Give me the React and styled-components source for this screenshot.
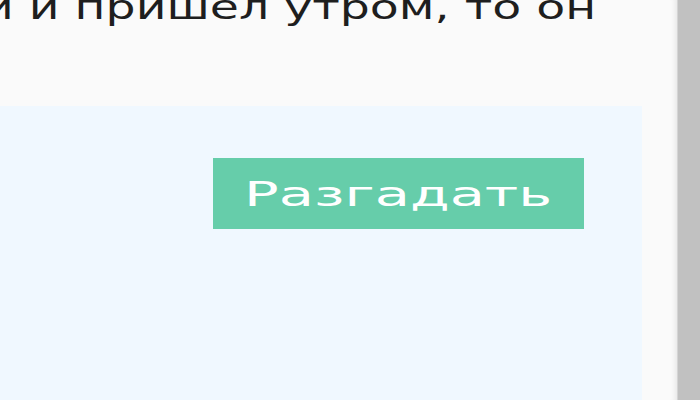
import React from "react";
import styled, { createGlobalStyle } from "styled-components";

const Global = createGlobalStyle`
  html, body { margin: 0; padding: 0; height: 100%; overflow: hidden; }
  body { background: #fafafa; }
  #root { height: 100%; }
`;

const Frame = styled.div`
  display: flex;
  height: 400px;
  width: 700px;
  font-family: "DejaVu Sans", Verdana, sans-serif;
`;

const Main = styled.div`
  flex: 1;
  overflow: hidden;
  background: #fafafa;
  box-shadow: inset -6px 0 5px -4px rgba(0, 0, 0, 0.08);
`;

const Scrollbar = styled.div`
  width: 22px;
  background: #c1c1c1;
  border-left: 1px solid #d4d4d4;
`;

const Paragraph = styled.p`
  margin: -11px 0 0 -48px;
  font-size: 33px;
  line-height: 38px;
  color: #1e1e1e;
  white-space: nowrap;
`;

const Stretched = styled.span`
  display: inline-block;
  transform: scaleX(${(p) => p.$sx});
  transform-origin: ${(p) => p.$origin || "left"} center;
`;

const Panel = styled.div`
  margin-top: 79px;
  width: 642px;
  height: 320px;
  background: #f0f8ff;
  display: flex;
  justify-content: flex-end;
  align-items: flex-start;
  padding: 52px 58px 0 0;
  box-sizing: border-box;
`;

const Button = styled.button`
  background: #66cdaa;
  color: #ffffff;
  border: none;
  border-radius: 0;
  font-family: "DejaVu Sans", Verdana, sans-serif;
  font-size: 34px;
  line-height: 38px;
  width: 371px;
  height: 71px;
  padding: 0;
  display: flex;
  align-items: center;
  justify-content: center;
  cursor: pointer;
  white-space: nowrap;
`;

export default function App() {
  return (
    <>
      <Global />
      <Frame>
        <Main>
          <Paragraph>
            <Stretched $sx={1.435}>ни и пришел утром, то он</Stretched>
          </Paragraph>
          <Panel>
            <Button>
              <Stretched $sx={1.69} $origin="center">
                Разгадать
              </Stretched>
            </Button>
          </Panel>
        </Main>
        <Scrollbar />
      </Frame>
    </>
  );
}
